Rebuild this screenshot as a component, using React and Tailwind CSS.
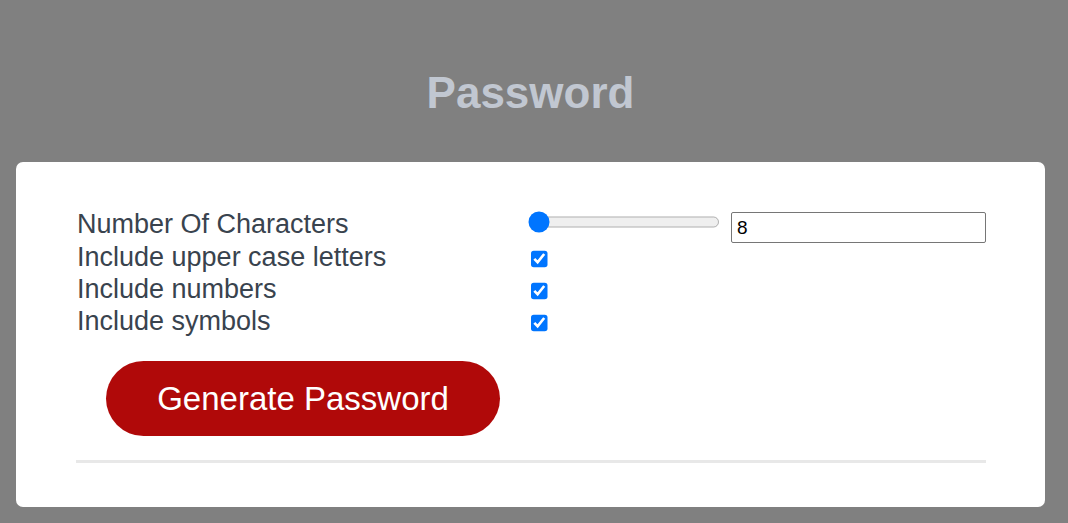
import React, { useState } from "react";

const options = [
  { key: "upper", label: "Include upper case letters" },
  { key: "numbers", label: "Include numbers" },
  { key: "symbols", label: "Include symbols" },
];

export default function App() {
  const [length, setLength] = useState(8);
  const [checked, setChecked] = useState({ upper: true, numbers: true, symbols: true });

  return (
    <div className="min-h-screen bg-[#808080] pt-[67px] font-['Liberation_Sans',Arial,sans-serif]">
      <div className="ml-[16px] w-[1029px]">
        <h1 className="text-center text-[44px] leading-[51px] font-bold text-[#c1c7d1]">Password</h1>

        <div className="mt-[44px] rounded-[7px] bg-white pt-[46px] pb-[44px] pl-[60px] pr-[59px]">
          {/* Length */}
          <div className="flex h-[33px] items-center">
            <span className="w-[449px] pl-px text-[27px] text-[#39434e]">Number Of Characters</span>
            <input
              type="range"
              min={8}
              max={32}
              value={length}
              onChange={(e) => setLength(Number(e.target.value))}
              className="m-0 mb-[4px] ml-[2px] w-[140px] [zoom:1.375]"
            />
            <input
              type="number"
              value={length}
              onChange={(e) => setLength(Number(e.target.value))}
              className="mt-[6px] ml-[11px] h-[31px] w-[255px] rounded-[2px] border border-[#767676] px-[5px] font-['Liberation_Sans',Arial,sans-serif] text-[19px] text-black"
            />
          </div>

          {/* Options */}
          {options.map((opt) => (
            <div key={opt.key} className="flex h-[32px] items-center">
              <span className="w-[449px] pl-px text-[27px] text-[#39434e]">{opt.label}</span>
              <input
                type="checkbox"
                checked={checked[opt.key]}
                onChange={() => setChecked({ ...checked, [opt.key]: !checked[opt.key] })}
                className="m-0 ml-[4px] mt-[3px] [zoom:1.375]"
              />
            </div>
          ))}

          <button className="mt-[24px] ml-[30px] h-[75px] w-[394px] rounded-full bg-[#b00909] text-[33px] text-white">
            Generate Password
          </button>

          <div className="mt-[24px] h-[3px] bg-[#e8e8e8]" />
        </div>
      </div>
    </div>
  );
}
